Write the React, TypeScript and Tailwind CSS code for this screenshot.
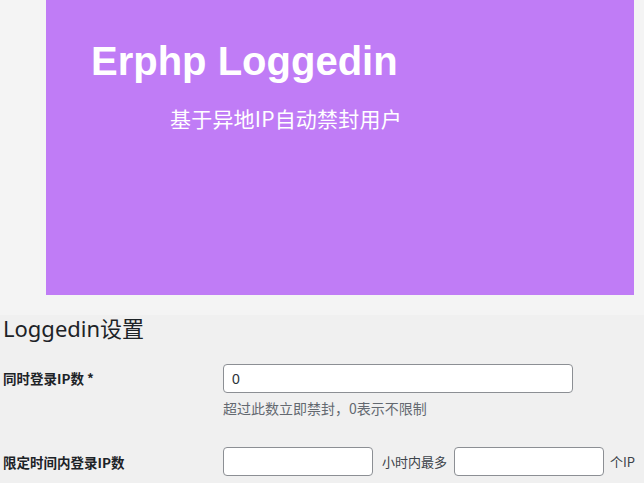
export default function App() {
  return (
    <div className="w-[644px] h-[483px] overflow-hidden bg-[#f0f0f0] font-['Liberation_Sans','Noto_Sans_CJK_SC',sans-serif] text-[#1d2327]">
      {/* Banner */}
      <div className="bg-[#f4f4f4] pl-[46px] pr-[10px] pb-[20px]">
        <div className="w-[588px] h-[295px] bg-[#c07cf6] pt-[37px] pl-[45px]">
          <h1 className="text-[40px] leading-[48px] font-bold text-white font-['Liberation_Sans',sans-serif]">
            Erphp Loggedin
          </h1>
          <p className="mt-[18px] pl-[79px] text-[21px] leading-[30px] tracking-[0.2px] text-white font-['Noto_Sans_CJK_SC',sans-serif]">
            基于异地IP自动禁封用户
          </p>
        </div>
      </div>

      {/* Settings */}
      <div className="px-[3px]">
        <h2 className="text-[22px] leading-[30px] -mt-[2px] font-['Noto_Sans','Noto_Sans_CJK_SC',sans-serif]">
          Loggedin设置
        </h2>

        <div className="flex mt-[21px]">
          <div className="w-[220px] pt-[4px] text-[13.5px] leading-[20px] font-bold font-['Noto_Sans_CJK_SC',sans-serif]">
            同时登录IP数 *
          </div>
          <div>
            <input
              type="text"
              defaultValue="0"
              className="w-[350px] h-[29px] bg-white border border-[#8c8f94] rounded-[4px] px-[8px] text-[14px] text-[#2c3338] outline-none"
            />
            <p className="mt-[5px] text-[14px] leading-[20px] text-[#646970] font-['Noto_Sans_CJK_SC',sans-serif]">
              超过此数立即禁封，0表示不限制
            </p>
          </div>
        </div>

        <div className="flex mt-[29px] items-center">
          <div className="w-[220px] text-[13.5px] leading-[20px] font-bold font-['Noto_Sans_CJK_SC',sans-serif]">
            限定时间内登录IP数
          </div>
          <div className="flex items-center text-[13px] text-[#3c434a] font-['Noto_Sans_CJK_SC',sans-serif]">
            <input
              type="text"
              className="w-[150px] h-[29px] bg-white border border-[#8c8f94] rounded-[4px] px-[8px] outline-none"
            />
            <span className="ml-[9px] mr-[7px]">小时内最多</span>
            <input
              type="text"
              className="w-[150px] h-[29px] bg-white border border-[#8c8f94] rounded-[4px] px-[8px] outline-none"
            />
            <span className="ml-[6px]">个IP</span>
          </div>
        </div>
      </div>
    </div>
  );
}
